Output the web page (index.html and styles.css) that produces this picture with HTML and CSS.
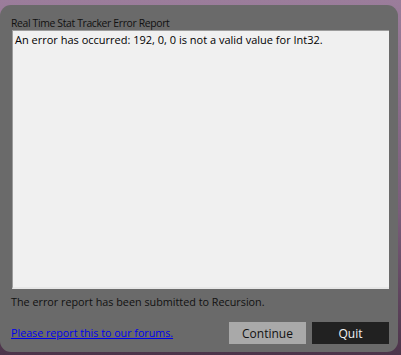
FILE: index.html
```html
<!DOCTYPE html>
<html lang="en">
<head>
    <meta charset="UTF-8">
    <title>Real Time Stat Tracker Error Report</title>
    <link rel="stylesheet" href="styles.css">
</head>
<body>
    <div class="dialog">
        <div class="titulo">Real Time Stat Tracker Error Report</div>
        <div class="caja">An error has occurred: 192, 0, 0 is not a valid value for Int32.</div>
        <div class="mensaje">The error report has been submitted to Recursion.</div>
        <div class="pie">
            <a href="#" class="enlace">Please report this to our forums.</a>
            <div class="botones">
                <button class="continuar">Continue</button>
                <button class="salir">Quit</button>
            </div>
        </div>
    </div>
</body>
</html>
```

FILE: styles.css
```css
*
{
    font-family: "Open Sans", "Noto Sans", sans-serif;
    box-sizing: border-box;
}

body
{
    margin: 0;
    width: 401px;
    height: 355px;
    background: linear-gradient(#9b7d9b, #7a5c7a 60%, #4c344a);
    overflow: hidden;
}

.dialog
{
    margin-top: 5px;
    width: 398px;
    height: 347px;
    background-color: #6a6a6a;
    border-radius: 11px;
    padding: 12px 9px 0 11px;
    display: flex;
    flex-direction: column;
}

.titulo
{
    font-size: 10.4px;
    letter-spacing: -0.35px;
    color: #111;
    height: 13px;
    line-height: 13px;
}

.caja
{
    margin-left: 1px;
    height: 259px;
    background-color: #f0f0f0;
    border-left: 1px solid #9c9c9c;
    border-top: 1px solid #9c9c9c;
    border-bottom: 2px solid #e6e6e6;
    padding: 1px 2px;
    font-size: 11px;
    line-height: 16px;
    color: #000;
}

.mensaje
{
    margin-top: 6px;
    font-size: 10.8px;
    color: #111;
    line-height: 14px;
}

.pie
{
    margin-top: 13px;
    display: flex;
    justify-content: space-between;
    align-items: center;
}

.enlace
{
    font-size: 10.7px;
    color: #0000ee;
}

.botones
{
    display: flex;
    gap: 6px;
}

button
{
    width: 77px;
    height: 22px;
    border: none;
    font-size: 12px;
    padding: 0;
}

.continuar
{
    background-color: #a9a9a9;
    color: #111;
}

.salir
{
    background-color: #212121;
    color: #f2f2f2;
}
```
